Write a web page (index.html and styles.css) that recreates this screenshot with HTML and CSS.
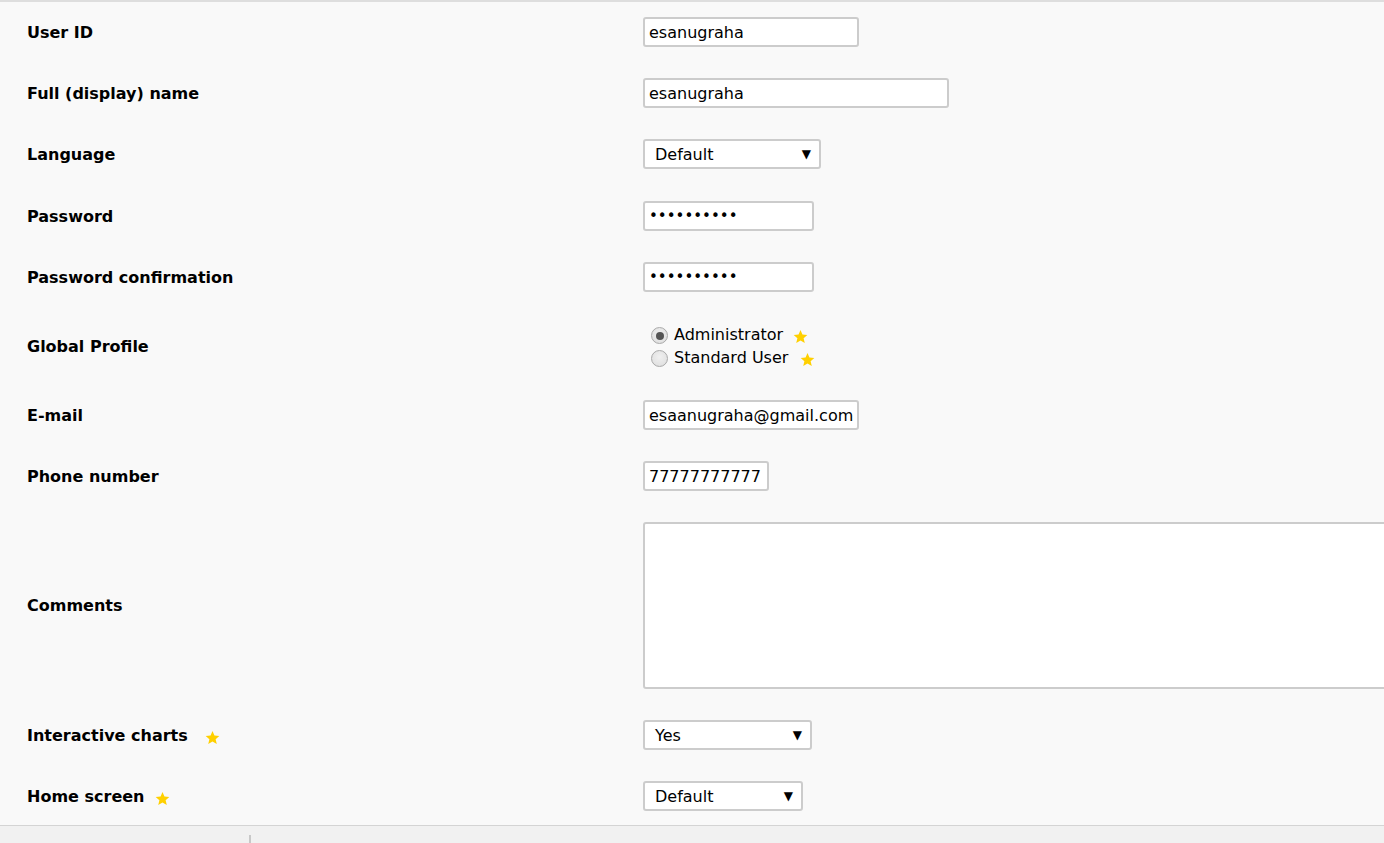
FILE: index.html
```html
<!DOCTYPE html>
<html>
<head>
<meta charset="utf-8">
<link rel="stylesheet" href="styles.css">
</head>
<body>
<div class="page">
  <form class="form">
    <div class="row">
      <div class="label">User ID</div>
      <div class="field"><input class="input w-userid" type="text" value="esanugraha"></div>
    </div>
    <div class="row">
      <div class="label">Full (display) name</div>
      <div class="field"><input class="input w-name" type="text" value="esanugraha"></div>
    </div>
    <div class="row">
      <div class="label">Language</div>
      <div class="field"><span class="select w-lang"><span class="select-text">Default</span><span class="arrow">▼</span></span></div>
    </div>
    <div class="row r-pass">
      <div class="label">Password</div>
      <div class="field"><input class="input w-pass" type="password" value="••••••••••"></div>
    </div>
    <div class="row">
      <div class="label">Password confirmation</div>
      <div class="field"><input class="input w-pass" type="password" value="••••••••••"></div>
    </div>
    <div class="row">
      <div class="label">Global Profile</div>
      <div class="field radios">
        <label class="radio-line"><span class="radio checked"></span><span>Administrator</span><svg class="star s-admin" viewBox="0 0 24 24"><path d="M12 1.5l3.1 7.2 7.8.7-5.9 5.2 1.8 7.7L12 18.2l-6.8 4.1 1.8-7.7-5.9-5.2 7.8-.7z"/></svg></label>
        <label class="radio-line"><span class="radio"></span><span>Standard User</span><svg class="star s-std" viewBox="0 0 24 24"><path d="M12 1.5l3.1 7.2 7.8.7-5.9 5.2 1.8 7.7L12 18.2l-6.8 4.1 1.8-7.7-5.9-5.2 7.8-.7z"/></svg></label>
      </div>
    </div>
    <div class="row">
      <div class="label">E-mail</div>
      <div class="field"><input class="input w-userid" type="text" value="esaanugraha@gmail.com"></div>
    </div>
    <div class="row">
      <div class="label">Phone number</div>
      <div class="field"><input class="input w-phone" type="text" value="77777777777"></div>
    </div>
    <div class="row">
      <div class="label">Comments</div>
      <div class="field field-clip"><textarea class="textarea"></textarea></div>
    </div>
    <div class="row">
      <div class="label">Interactive charts <svg class="star s-label1" viewBox="0 0 24 24"><path d="M12 1.5l3.1 7.2 7.8.7-5.9 5.2 1.8 7.7L12 18.2l-6.8 4.1 1.8-7.7-5.9-5.2 7.8-.7z"/></svg></div>
      <div class="field"><span class="select w-charts"><span class="select-text">Yes</span><span class="arrow">▼</span></span></div>
    </div>
    <div class="row">
      <div class="label">Home screen <svg class="star s-label2" viewBox="0 0 24 24"><path d="M12 1.5l3.1 7.2 7.8.7-5.9 5.2 1.8 7.7L12 18.2l-6.8 4.1 1.8-7.7-5.9-5.2 7.8-.7z"/></svg></div>
      <div class="field"><span class="select w-home"><span class="select-text">Default</span><span class="arrow">▼</span></span></div>
    </div>
  </form>
  <div class="footer"><div class="footer-left"></div><div class="footer-sep"></div></div>
</div>
</body>
</html>
```

FILE: styles.css
```css
html, body {
  margin: 0;
  padding: 0;
  height: 100%;
  overflow: hidden;
  background: #f9f9f9;
}
.page {
  border-top: 2px solid #dedede;
  font-family: "DejaVu Sans", Verdana, sans-serif;
  color: #000;
}
.form {
  display: flex;
  flex-direction: column;
  gap: 31px;
  padding: 15px 0 14px 27px;
}
.r-pass { margin-top: 1px; }
.row {
  display: grid;
  grid-template-columns: 616px 1fr;
  align-items: center;
}
.label {
  font-weight: bold;
  font-size: 16px;
  display: flex;
  align-items: center;
  white-space: nowrap;
}
.field {
  display: flex;
  align-items: center;
  min-width: 0;
}
.field-clip {
  overflow: hidden;
}
.input {
  box-sizing: border-box;
  height: 30px;
  border: 2px solid #cccccc;
  border-radius: 3px;
  background: #fff;
  padding: 0 4px;
  font-family: "DejaVu Sans", Verdana, sans-serif;
  font-size: 16px;
  color: #000;
  outline: none;
}
input[type="password"] {
  font-size: 15px;
  letter-spacing: 0;
}
.w-userid { width: 216px; }
.w-name { width: 306px; }
.w-pass { width: 171px; }
.w-phone { width: 126px; }
.select {
  box-sizing: border-box;
  height: 30px;
  border: 2px solid #cccccc;
  border-radius: 3px;
  background: #fff;
  display: flex;
  align-items: center;
  justify-content: space-between;
  padding: 0 8px 0 10px;
  font-size: 16px;
}
.arrow {
  font-size: 12px;
  font-family: "DejaVu Sans", sans-serif;
}
.w-lang { width: 178px; }
.w-charts { width: 169px; }
.w-home { width: 160px; }
.radios {
  flex-direction: column;
  align-items: flex-start;
  padding-left: 8px;
  font-size: 16px;
}
.radio-line {
  display: flex;
  align-items: center;
  height: 23px;
}
.radio {
  box-sizing: border-box;
  width: 17px;
  height: 17px;
  border-radius: 50%;
  border: 1px solid #a9a9a9;
  background: radial-gradient(circle at 50% 40%, #f0f0f0 0%, #dcdcdc 100%);
  margin-right: 6px;
  margin-top: 2px;
  display: flex;
  align-items: center;
  justify-content: center;
}
.radio.checked::after {
  content: "";
  width: 8px;
  height: 8px;
  border-radius: 50%;
  background: #555;
}
.star {
  width: 15px;
  height: 15px;
  fill: #ffd000;
}
.s-admin { margin-left: 10px; margin-top: 3px; }
.s-std { margin-left: 12px; margin-top: 3px; }
.s-label1 { margin-left: 17px; margin-top: 4px; }
.s-label2 { margin-left: 11px; margin-top: 4px; }
.textarea {
  box-sizing: border-box;
  flex-shrink: 0;
  width: calc(100% + 6px);
  height: 167px;
  border: 2px solid #cccccc;
  border-radius: 3px;
  background: #fff;
  resize: none;
  outline: none;
}
.footer {
  border-top: 1px solid #d4d4d4;
  background: #f1f1f1;
  height: 40px;
  display: flex;
}
.footer-left {
  width: 249px;
}
.footer-sep {
  width: 2px;
  margin-top: 9px;
  background: #c8c8c8;
}
```
